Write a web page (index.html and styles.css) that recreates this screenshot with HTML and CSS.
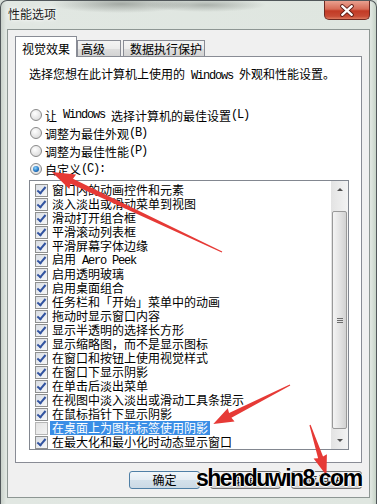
FILE: index.html
```html
<!DOCTYPE html>
<html lang="zh-CN">
<head>
    <meta charset="UTF-8">
    <title>性能选项</title>
    <link rel="stylesheet" href="styles.css">
</head>
<body>
    <div class="window">
        <div class="titlebar">
            <span class="title">性能选项</span>
            <span class="close">
                <svg width="46" height="19" viewBox="0 0 46 19">
                    <path d="M18 5 L28 14 M28 5 L18 14" stroke="#5b1c14" stroke-width="4.4" stroke-linecap="round"/>
                    <path d="M18 5 L28 14 M28 5 L18 14" stroke="#fff" stroke-width="2.4" stroke-linecap="round"/>
                </svg>
            </span>
        </div>

        <div class="client">
            <div class="tabs">
                <div class="tab active">视觉效果</div>
                <div class="tab t-adv">高级</div>
                <div class="tab t-dep">数据执行保护</div>
            </div>

            <div class="panel">
                <p class="intro">选择您想在此计算机上使用的<span class="en"> Windows </span>外观和性能设置。</p>

                <div class="radios">
                    <div class="radio"><span class="rb"></span>让<span class="en"> Windows </span>选择计算机的最佳设置<span class="en">(L)</span></div>
                    <div class="radio"><span class="rb"></span>调整为最佳外观<span class="en">(B)</span></div>
                    <div class="radio"><span class="rb"></span>调整为最佳性能<span class="en">(P)</span></div>
                    <div class="radio"><span class="rb on"></span>自定义<span class="en">(C):</span></div>
                </div>

                <div class="listbox">
                    <div class="items">
                        <div class="item"><span class="cb on"></span><span class="txt">窗口内的动画控件和元素</span></div>
                        <div class="item"><span class="cb on"></span><span class="txt">淡入淡出或滑动菜单到视图</span></div>
                        <div class="item"><span class="cb on"></span><span class="txt">滑动打开组合框</span></div>
                        <div class="item"><span class="cb on"></span><span class="txt">平滑滚动列表框</span></div>
                        <div class="item"><span class="cb on"></span><span class="txt">平滑屏幕字体边缘</span></div>
                        <div class="item"><span class="cb on"></span><span class="txt">启用<span class="en"> Aero Peek</span></span></div>
                        <div class="item"><span class="cb on"></span><span class="txt">启用透明玻璃</span></div>
                        <div class="item"><span class="cb on"></span><span class="txt">启用桌面组合</span></div>
                        <div class="item"><span class="cb on"></span><span class="txt">任务栏和「开始」菜单中的动画</span></div>
                        <div class="item"><span class="cb on"></span><span class="txt">拖动时显示窗口内容</span></div>
                        <div class="item"><span class="cb on"></span><span class="txt">显示半透明的选择长方形</span></div>
                        <div class="item"><span class="cb on"></span><span class="txt">显示缩略图，而不是显示图标</span></div>
                        <div class="item"><span class="cb on"></span><span class="txt">在窗口和按钮上使用视觉样式</span></div>
                        <div class="item"><span class="cb on"></span><span class="txt">在窗口下显示阴影</span></div>
                        <div class="item"><span class="cb on"></span><span class="txt">在单击后淡出菜单</span></div>
                        <div class="item"><span class="cb on"></span><span class="txt">在视图中淡入淡出或滑动工具条提示</span></div>
                        <div class="item"><span class="cb on"></span><span class="txt">在鼠标指针下显示阴影</span></div>
                        <div class="item"><span class="cb off"></span><span class="txt selected">在桌面上为图标标签使用阴影</span></div>
                        <div class="item"><span class="cb on"></span><span class="txt">在最大化和最小化时动态显示窗口</span></div>
                    </div>
                    <div class="scrollbar">
                        <div class="sb-btn"><span class="tri-up"></span></div>
                        <div class="sb-gap"></div>
                        <div class="thumb"><span class="grip"></span></div>
                        <div class="sb-fill"></div>
                        <div class="sb-btn"><span class="tri-down"></span></div>
                    </div>
                </div>
            </div>

            <div class="buttons">
                <div class="btn default">确定</div>
                <div class="btn">取消</div>
                <div class="btn">应用<span class="en">(A)</span></div>
            </div>
        </div>
    </div>

    <!-- red annotation arrows drawn over the dialog -->
    <svg class="arrows" width="377" height="504" viewBox="0 0 377 504">
        <polygon transform="translate(222 252) rotate(205.2)" points="0,-0.6 166,-2.8 165,-8 188,0 165,8 166,2.8 0,0.6"/>
        <polygon transform="translate(290 385) rotate(153.1)" points="0,-0.6 67,-2.6 66,-7.5 86,0 66,7.5 67,2.6 0,0.6"/>
        <polygon transform="translate(310 425) rotate(71.9)" points="0,-0.6 34,-2.6 33,-7 53,0 33,7 34,2.6 0,0.6"/>
    </svg>

    <div class="watermark">shenduwin8.com</div>
</body>
</html>
```

FILE: styles.css
```css
body {
    margin: 0;
    width: 377px;
    height: 504px;
    overflow: hidden;
    position: relative;
    background: #d6ddd7;
    font-family: "Noto Sans CJK SC", "Liberation Sans", sans-serif;
    font-size: 12px;
    color: #000;
}

.en {
    font-family: "Liberation Mono", monospace;
    font-size: 12px;
    letter-spacing: -1.2px;
    white-space: pre;
}

.window {
    box-sizing: border-box;
    height: 504px;
    border: 1px solid #51575a;
    border-bottom: 0;
    border-radius: 7px 7px 0 0;
    background:
        radial-gradient(ellipse 70px 9px at 120px 3px, rgba(50, 55, 50, 0.35), transparent),
        radial-gradient(ellipse 60px 7px at 205px 4px, rgba(50, 55, 50, 0.3), transparent),
        linear-gradient(to right, #c9d1ca, #e1e7e2 5px, #dfe6e0 370px, #c6d3c7);
}

.titlebar {
    height: 28px;
    display: flex;
    justify-content: space-between;
    align-items: flex-start;
    padding-left: 7px;
}

.title {
    padding-top: 6px;
    line-height: 14px;
    color: #1b1b1b;
    text-shadow: 0 0 6px #fff, 0 0 3px #fff;
}

.close {
    width: 46px;
    height: 19px;
    box-sizing: border-box;
    margin-right: 6px;
    border: 1px solid #6e2a22;
    border-top: 0;
    border-radius: 0 0 5px 5px;
    background: linear-gradient(#e9a08f, #d66c57 45%, #c23a25 55%, #c84b35 85%, #dd7a5f);
    display: flex;
    align-items: center;
    justify-content: center;
}

.close svg {
    display: block;
}

.client {
    box-sizing: border-box;
    height: 469px;
    margin: 0 6px;
    border: 1px solid #8d9693;
    background: #f0f0f0;
    padding: 6px 7px 0;
}

.tabs {
    display: flex;
    align-items: flex-end;
    height: 20px;
}

.tab {
    box-sizing: border-box;
    height: 16px;
    border: 1px solid #898c95;
    border-bottom: 0;
    background: linear-gradient(#f4f4f4, #ececec 50%, #dedede 51%, #d3d3d3);
    line-height: 14px;
    padding-top: 1px;
    white-space: nowrap;
    overflow: hidden;
}

.tab.active {
    width: 62px;
    height: 21px;
    margin-bottom: -1px;
    padding: 5px 0 0 6px;
    background: #fff;
    position: relative;
    z-index: 1;
}

.t-adv {
    width: 44px;
    padding-left: 3px;
}

.t-dep {
    width: 82px;
    margin-left: 2px;
    padding-left: 6px;
}

.panel {
    box-sizing: border-box;
    height: 407px;
    border: 1px solid #898c95;
    background: #fff;
    padding: 10px 0 0 13px;
}

.intro {
    margin: 0;
    line-height: 14px;
    white-space: nowrap;
}

.radios {
    margin-top: 23px;
}

.radio {
    height: 18px;
    display: flex;
    align-items: center;
    white-space: nowrap;
}

.rb {
    width: 12px;
    height: 12px;
    box-sizing: border-box;
    margin: 0 3px 0 1px;
    border: 1px solid #8a8a8a;
    border-radius: 50%;
    background: radial-gradient(circle at 40% 35%, #fff, #e4e4e4 60%, #cdcdcd);
    display: flex;
    align-items: center;
    justify-content: center;
    flex: none;
}

.rb.on::after {
    content: "";
    width: 6px;
    height: 6px;
    border-radius: 50%;
    background: radial-gradient(circle at 40% 35%, #8fd6ff, #1d6fbd 60%, #0b3d77);
}

.listbox {
    box-sizing: border-box;
    width: 320px;
    height: 270px;
    margin-top: 2px;
    border: 1px solid #828790;
    display: flex;
}

.items {
    flex: 1;
    padding-top: 2px;
    overflow: hidden;
}

.item {
    height: 14px;
    display: flex;
    align-items: center;
    padding-left: 5px;
    white-space: nowrap;
}

.cb {
    width: 13px;
    height: 13px;
    box-sizing: border-box;
    border: 1px solid #8e8f8f;
    background: linear-gradient(135deg, #d9dde3, #f6f7f9);
    display: flex;
    align-items: center;
    justify-content: center;
    flex: none;
}

.cb.on::after {
    content: "";
    width: 3px;
    height: 7px;
    margin-top: -2px;
    border: solid #3153a0;
    border-width: 0 2px 2px 0;
    transform: rotate(40deg);
}

.cb.off {
    border-color: #b5b5b5;
    background: linear-gradient(135deg, #e2e2e2, #f3f3f3);
}

.txt {
    margin-left: 2px;
    padding: 0 2px;
    line-height: 14px;
}

.txt.selected {
    background: #3a8ee6;
    color: #fff;
}

.scrollbar {
    width: 17px;
    display: flex;
    flex-direction: column;
    background: linear-gradient(to right, #e3e3e3, #f3f3f3);
}

.sb-btn {
    height: 17px;
    display: flex;
    align-items: center;
    justify-content: center;
    flex: none;
}

.tri-up {
    border-left: 3px solid transparent;
    border-right: 3px solid transparent;
    border-bottom: 3px solid #505050;
}

.tri-down {
    border-left: 3px solid transparent;
    border-right: 3px solid transparent;
    border-top: 3px solid #505050;
}

.sb-gap {
    height: 13px;
}

.thumb {
    height: 218px;
    box-sizing: border-box;
    margin: 0 1px;
    border: 1px solid #999;
    border-radius: 2px;
    background: linear-gradient(to right, #f4f4f4, #e4e4e4 50%, #d2d2d2);
    display: flex;
    align-items: center;
    justify-content: center;
}

.grip {
    width: 6px;
    height: 1px;
    background: #6d6d6d;
    box-shadow: 0 -2px #6d6d6d, 0 2px #6d6d6d;
}

.sb-fill {
    flex: 1;
}

.buttons {
    display: flex;
    justify-content: flex-end;
    gap: 10px;
    margin-top: 8px;
}

.btn {
    width: 71px;
    height: 18px;
    box-sizing: border-box;
    border: 1px solid #707070;
    border-radius: 3px;
    background: linear-gradient(#f3f3f3, #ebebeb 50%, #dddddd 51%, #cfcfcf);
    display: flex;
    align-items: center;
    justify-content: center;
    line-height: 14px;
}

.btn.default {
    border-color: #4f7fa6;
    background: linear-gradient(#f1f6fa, #e4ecf3 50%, #d4e1eb 51%, #cbd9e5);
}

.arrows {
    position: absolute;
    left: 0;
    top: 0;
    pointer-events: none;
    fill: #e63a36;
}

.watermark {
    position: absolute;
    left: 196px;
    top: 467px;
    font-family: "Liberation Sans", sans-serif;
    font-weight: bold;
    font-size: 23px;
    line-height: 23px;
    letter-spacing: -1.5px;
    color: #000;
    text-shadow: 1px 0 #fff, -1px 0 #fff, 0 1px #fff;
}
```
